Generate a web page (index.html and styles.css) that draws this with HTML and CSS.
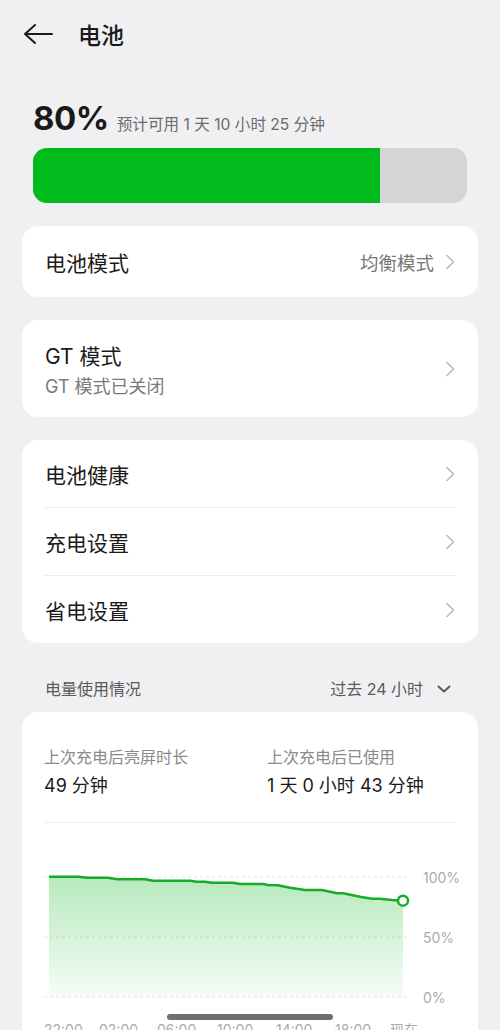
FILE: index.html
```html
<!DOCTYPE html>
<html lang="zh-CN">
<head>
  <meta charset="UTF-8" />
  <meta name="viewport" content="width=device-width, initial-scale=1.0"/>
  <title>电池</title>
  <link rel="stylesheet" href="styles.css">
</head>
<body>
  <header class="topbar">
    <svg class="back" width="30" height="22" viewBox="0 0 30 22">
      <path d="M12 2 L2 11 L12 20 M2 11 H29" fill="none" stroke="#1a1a1a" stroke-width="2" stroke-linecap="round" stroke-linejoin="round"/>
    </svg>
    <h1>电池</h1>
  </header>

  <section class="summary">
    <div class="level">
      <span class="percent">80%</span>
      <span class="remain">预计可用 1 天 10 小时 25 分钟</span>
    </div>
    <div class="bar"><div class="bar-fill" style="width: 80%;"></div></div>
  </section>

  <div class="card">
    <div class="row">
      <span class="row-title">电池模式</span>
      <span class="row-value">均衡模式</span>
      <svg class="chev" width="10" height="16" viewBox="0 0 10 16"><path d="M2 1.5 L8.5 8 L2 14.5" fill="none" stroke="#b8b8b8" stroke-width="1.5" stroke-linecap="round" stroke-linejoin="round"/></svg>
    </div>
  </div>

  <div class="card">
    <div class="row row-tall">
      <div class="row-text">
        <span class="row-title">GT 模式</span>
        <span class="row-sub">GT 模式已关闭</span>
      </div>
      <svg class="chev" width="10" height="16" viewBox="0 0 10 16"><path d="M2 1.5 L8.5 8 L2 14.5" fill="none" stroke="#b8b8b8" stroke-width="1.5" stroke-linecap="round" stroke-linejoin="round"/></svg>
    </div>
  </div>

  <div class="card">
    <div class="row">
      <span class="row-title">电池健康</span>
      <svg class="chev" width="10" height="16" viewBox="0 0 10 16"><path d="M2 1.5 L8.5 8 L2 14.5" fill="none" stroke="#b8b8b8" stroke-width="1.5" stroke-linecap="round" stroke-linejoin="round"/></svg>
    </div>
    <div class="divider"></div>
    <div class="row">
      <span class="row-title">充电设置</span>
      <svg class="chev" width="10" height="16" viewBox="0 0 10 16"><path d="M2 1.5 L8.5 8 L2 14.5" fill="none" stroke="#b8b8b8" stroke-width="1.5" stroke-linecap="round" stroke-linejoin="round"/></svg>
    </div>
    <div class="divider"></div>
    <div class="row">
      <span class="row-title">省电设置</span>
      <svg class="chev" width="10" height="16" viewBox="0 0 10 16"><path d="M2 1.5 L8.5 8 L2 14.5" fill="none" stroke="#b8b8b8" stroke-width="1.5" stroke-linecap="round" stroke-linejoin="round"/></svg>
    </div>
  </div>

  <div class="section-head">
    <span>电量使用情况</span>
    <span class="range">过去 24 小时
      <svg width="14" height="10" viewBox="0 0 14 10"><path d="M1.5 2.5 L7 7.5 L12.5 2.5" fill="none" stroke="#5a5a5a" stroke-width="2" stroke-linecap="round" stroke-linejoin="round"/></svg>
    </span>
  </div>

  <div class="card usage">
    <div class="stats">
      <div class="stat">
        <span class="stat-label">上次充电后亮屏时长</span>
        <span class="stat-value">49 分钟</span>
      </div>
      <div class="stat">
        <span class="stat-label">上次充电后已使用</span>
        <span class="stat-value">1 天 0 小时 43 分钟</span>
      </div>
    </div>
    <div class="divider"></div>

    <!-- 电量曲线，坐标按页面像素写 -->
    <svg class="chart" width="456" height="220" viewBox="22 823 456 220">
      <defs>
        <linearGradient id="fade" x1="0" y1="0" x2="0" y2="1">
          <stop offset="0" stop-color="#2fc140" stop-opacity="0.35"/>
          <stop offset="1" stop-color="#2fc140" stop-opacity="0.04"/>
        </linearGradient>
      </defs>
      <g stroke="#e2e2e2" stroke-width="1" stroke-dasharray="3 3">
        <line x1="44" y1="877" x2="407" y2="877"/>
        <line x1="44" y1="937" x2="407" y2="937"/>
        <line x1="44" y1="997" x2="407" y2="997"/>
      </g>
      <path fill="url(#fade)" d="M49 876.7 L79 876.7 L87 877.7 L108 877.7 L117 879.3 L145 879.3 L153 880.7 L190 880.7 L197 881.7 L205 881.7 L212 882.7 L233 882.7 L240 884 L263 884 L268 885 L278 885.3 L290 887.7 L305 890 L322 890 L337 893.3 L343 893.3 L360 896.7 L372 898.7 L380 898.7 L392 900 L403 900.7 L403 997 L49 997 Z"/>
      <path fill="none" stroke="#17ab2a" stroke-width="2.5" stroke-linejoin="round" d="M49 876.7 L79 876.7 L87 877.7 L108 877.7 L117 879.3 L145 879.3 L153 880.7 L190 880.7 L197 881.7 L205 881.7 L212 882.7 L233 882.7 L240 884 L263 884 L268 885 L278 885.3 L290 887.7 L305 890 L322 890 L337 893.3 L343 893.3 L360 896.7 L372 898.7 L380 898.7 L392 900 L403 900.7"/>
      <circle cx="403" cy="900.7" r="5" fill="#fff" stroke="#17ab2a" stroke-width="2.5"/>
      <g class="axis">
        <text x="423" y="883">100%</text>
        <text x="423" y="943">50%</text>
        <text x="423" y="1003">0%</text>
        <text x="44" y="1035">22:00</text>
        <text x="99" y="1035">02:00</text>
        <text x="157" y="1035">06:00</text>
        <text x="217" y="1035">10:00</text>
        <text x="276" y="1035">14:00</text>
        <text x="335" y="1035">18:00</text>
        <text x="390" y="1035">现在</text>
      </g>
    </svg>
  </div>

  <div class="home-bar"></div>
</body>
</html>
```

FILE: styles.css
```css
html, body {
  height: 1030px;
  overflow: hidden;
}
body {
  margin: 0;
  background: #f0f0f2;
  font-family: "Inter", "Noto Sans CJK SC", sans-serif;
  color: #1a1a1a;
  position: relative;
}
.topbar {
  height: 68px;
  display: flex;
  align-items: center;
  padding-left: 23px;
}
.topbar h1 {
  margin: 0 0 0 25px;
  font-size: 23px;
  font-weight: 500;
}
.summary {
  padding: 0 33px;
  margin-top: 30px;
}
.level {
  display: flex;
  align-items: baseline;
  height: 44px;
}
.percent {
  font-size: 33px;
  font-weight: 700;
  letter-spacing: -0.5px;
}
.remain {
  margin-left: 8px;
  font-size: 15.6px;
  color: #6b6b6b;
}
.bar {
  margin-top: 6px;
  height: 55px;
  border-radius: 14px;
  background: #d5d5d7;
  overflow: hidden;
}
.bar-fill {
  height: 100%;
  background: #00bb1b;
}
.card {
  margin: 23px 22px 0;
  background: #fff;
  border-radius: 16px;
}
.row {
  height: 71px;
  display: flex;
  align-items: center;
  padding: 0 23px;
}
.card + .card .row {
  height: 67px;
}
.card .row.row-tall {
  height: 97px;
}
.row-title {
  font-size: 21px;
  flex: 1;
}
.row-value {
  font-size: 18.5px;
  color: #777;
  margin-right: 11px;
}
.row-text {
  flex: 1;
  display: flex;
  flex-direction: column;
  gap: 2px;
}
.row-sub {
  font-size: 18px;
  color: #7a7a7a;
}
.divider {
  height: 1px;
  background: #ececec;
  margin: 0 22px;
}
.section-head {
  display: flex;
  justify-content: space-between;
  align-items: center;
  padding: 35px 49px 12px 45px;
  line-height: 22px;
  font-size: 16px;
  color: #5a5a5a;
}
.range {
  display: flex;
  align-items: center;
  gap: 14px;
}
.usage {
  margin-top: 0;
  height: 400px;
}
.stats {
  display: grid;
  grid-template-columns: 223px 1fr;
  padding: 35px 22px 23px;
}
.stat {
  display: flex;
  flex-direction: column;
}
.stat-label {
  font-size: 16px;
  color: #8a8a8a;
  line-height: 20px;
}
.stat-value {
  font-size: 18px;
  line-height: 26px;
  margin-top: 6px;
}
.chart {
  display: block;
}
.axis text {
  font-family: "Inter", "Noto Sans CJK SC", sans-serif;
  font-size: 14px;
  fill: #ababab;
}
.home-bar {
  position: absolute;
  left: 167px;
  top: 1014px;
  width: 166px;
  height: 6px;
  border-radius: 3px;
  background: #707070;
}
```
